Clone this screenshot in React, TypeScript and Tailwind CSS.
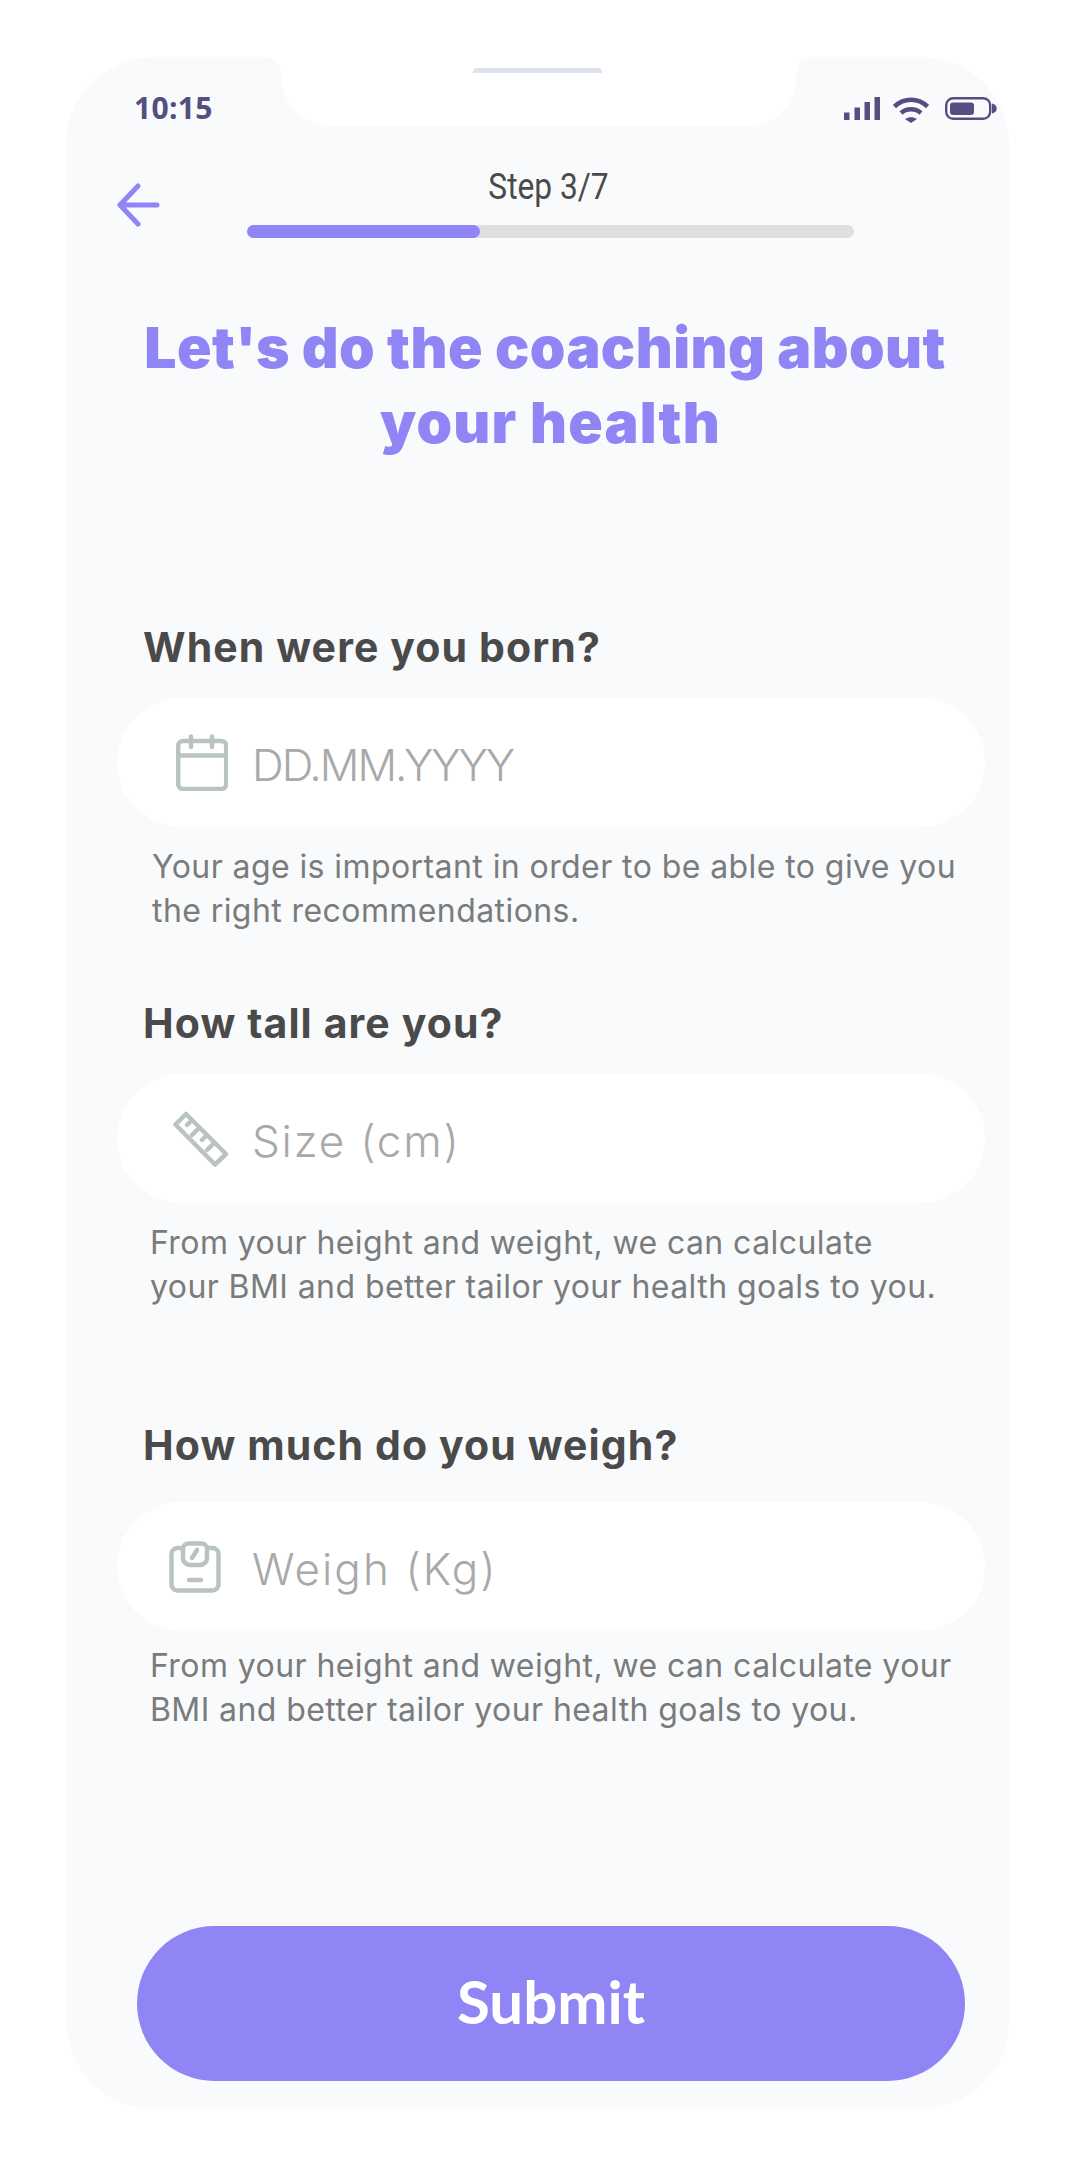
const Sans = "font-['Inter','Noto_Sans',sans-serif]";

function Calendar() {
  return (
    <svg width="52" height="57" viewBox="0 0 52 57" fill="none" stroke="#b9c4c0" strokeWidth="4.5" strokeLinecap="round">
      <rect x="2.2" y="7" width="48" height="48" rx="5" />
      <path d="M2.2 21.5H50" />
      <path d="M15 2.5V13M36 2.5V13" />
    </svg>
  );
}

function RulerIcon() {
  return (
    <svg width="56" height="56" viewBox="0 0 56 56" fill="none" stroke="#b9c4c0" strokeWidth="4.5" strokeLinejoin="round" strokeLinecap="round">
      <path d="M13 3L53 43L42 53.5L2.5 13.5Z" />
      <path d="M18.5 9.5L14 14M26 17L19 24M33.5 24.5L29 29M41 32L34 39" />
    </svg>
  );
}

function ScaleIcon() {
  return (
    <svg width="52" height="52" viewBox="0 0 52 52" fill="none" stroke="#b9c4c0" strokeWidth="4.5" strokeLinecap="round" strokeLinejoin="round">
      <path d="M14 7H9a6 6 0 0 0-6.500 6v30a6 6 0 0 0 6 6.500h35a6 6 0 0 0 6-6.500V13a6 6 0 0 0-6-6h-5" />
      <path d="M14 8a5.500 5.500 0 0 1 5.500-5.500h13A5.500 5.500 0 0 1 38 8v9a7 7 0 0 1-7 7H21a7 7 0 0 1-7-7Z" />
      <path d="M23 17l5-8M20 39h12" />
    </svg>
  );
}

function Notch() {
  return (
    <svg className="absolute top-0 left-[197px]" width="549" height="69" viewBox="0 0 549 69">
      <path d="M0 0C12 0 19 6 19 22C20 50 40 69 72 69H481C513 69 532 50 533 22C533 6 537 0 549 0Z" fill="#ffffff" />
      <path d="M210 17V15a4 4 0 0 1 4-4H335a4 4 0 0 1 4 4V17a3 3 0 0 0-3-1H213a3 3 0 0 0-3 1Z" fill="#dde3ee" />
    </svg>
  );
}

function StatusIcons() {
  return (
    <div className="mt-[3px] flex items-start">
      <svg width="36" height="23" viewBox="0 0 36 23" fill="#544f80">
        <rect x="0" y="15.500" width="5.500" height="7.500" />
        <rect x="10.500" y="10.500" width="5.500" height="12.500" />
        <rect x="20.500" y="5" width="5.500" height="18" />
        <rect x="30.500" y="0" width="5.500" height="23" />
      </svg>
      <svg className="ml-[13px]" width="36" height="26" viewBox="0 0 36 26" fill="none" stroke="#544f80" strokeWidth="4.500">
        <path d="M1.500 9.500C11 0.500 25 0.500 34.500 9.500" />
        <path d="M8 16C13.500 11 22.500 11 28 16" />
        <path d="M12 22L18 26L24 22C20 19.500 16 19.500 12 22Z" fill="#544f80" stroke="none" />
      </svg>
      <svg className="ml-[16px]" width="52" height="23" viewBox="0 0 52 23" fill="none">
        <rect x="1.200" y="1.200" width="44" height="20.600" rx="7" stroke="#544f80" strokeWidth="2.400" />
        <rect x="5" y="5.500" width="24" height="12.500" rx="3" fill="#544f80" />
        <path d="M47 6.500L48.500 7a4.800 4.800 0 0 1 0 9L47 16.500Z" fill="#544f80" />
      </svg>
    </div>
  );
}

const fields = [
  {
    label: "When were you born?",
    placeholder: "DD.MM.YYYY",
    icon: <Calendar />,
    iconClass: "ml-[59px] w-[76px]",
    textClass: "tracking-[-2px]",
    lines: ["Your age is important in order to be able to give you", "the right recommendations."],
    helpClass: "mt-[18px] ml-[86px]",
    inputMt: "mt-[26px]",
    mt: "mt-[162px]",
  },
  {
    label: "How tall are you?",
    placeholder: "Size (cm)",
    icon: <RulerIcon />,
    iconClass: "ml-[56px] w-[79px]",
    textClass: "tracking-[1.8px]",
    lines: ["From your height and weight, we can calculate", "your BMI and better tailor your health goals to you."],
    helpClass: "mt-[18px] ml-[84px]",
    inputMt: "mt-[26px]",
    mt: "mt-[65px]",
  },
  {
    label: "How much do you weigh?",
    placeholder: "Weigh (Kg)",
    icon: <ScaleIcon />,
    iconClass: "ml-[52px] w-[83px]",
    textClass: "tracking-[2.1px]",
    lines: ["From your height and weight, we can calculate your", "BMI and better tailor your health goals to you."],
    helpClass: "mt-[13px] ml-[84px]",
    inputMt: "mt-[32px]",
    mt: "mt-[111px]",
  },
];

export default function App() {
  return (
    <div className={`h-[2161px] w-[1071px] bg-white pt-[57px] pl-[66px] ${Sans}`}>
      <div className="relative flex h-[2052px] w-[943px] flex-col rounded-[88px] bg-[#f9fafc]">
        <Notch />
        <div className="mt-[36px] flex h-[30px] items-center justify-between pr-[12px] pl-[68px]">
          <span className="font-['Open_Sans',sans-serif] text-[30px] leading-[30px] font-bold tracking-[0.3px] text-[#544f80]">10:15</span>
          <StatusIcons />
        </div>
        <div className="mt-[42px] flex h-[73px] items-end">
          <svg className="mb-[11px] ml-[51px]" width="43" height="44" viewBox="0 0 43 44" fill="none" stroke="#8f85f7" strokeWidth="5" strokeLinecap="round" strokeLinejoin="round">
            <path d="M21 3L3 22L21 41M3 22H40" />
          </svg>
          <div className="ml-[87px] flex w-[607px] flex-col">
            <span className="-ml-[4px] scale-x-[0.88] text-center font-['Roboto',sans-serif] text-[36px] leading-[44px] text-[#4a4a4a]">Step 3/7</span>
            <div className="mt-[16px] h-[13px] rounded-full bg-[#dfdfdf]">
              <div className="h-full w-[233px] rounded-full bg-[#8f85f5]" />
            </div>
          </div>
        </div>
        <h1 className="mt-[72px] pl-[26px] text-center text-[57px] leading-[75px] font-black tracking-[0.47px] text-[#8f85f5]">
          <span className="block pr-[11px]">Let's do the coaching about</span>
          <span className="block tracking-[1.2px]">your health</span>
        </h1>
        {fields.map((f) => (
          <div key={f.label} className={f.mt}>
            <p className="ml-[77px] text-[41px] leading-[50px] font-bold tracking-[1.1px] text-[#4a4a4a]">{f.label}</p>
            <div className={`ml-[51px] flex h-[129px] w-[868px] items-center rounded-[65px] bg-white ${f.inputMt}`}>
              <span className={`flex shrink-0 ${f.iconClass}`}>{f.icon}</span>
              <span className={`pt-[5px] text-[44px] leading-none font-[350] text-[#a9a9a9] ${f.textClass}`}>{f.placeholder}</span>
            </div>
            <p className={`text-[32px] leading-[44px] tracking-[0.42px] text-[#7a7c7c] ${f.helpClass}`}>
              {f.lines.map((l) => (
                <span key={l} className="block">{l}</span>
              ))}
            </p>
          </div>
        ))}
        <button className="mt-auto mb-[28px] ml-[71px] flex h-[155px] w-[828px] items-center justify-center rounded-[78px] bg-[#8f85f5] pb-[5px] font-['Lato',sans-serif] text-[60px] font-bold text-white">
          Submit
        </button>
      </div>
    </div>
  );
}
